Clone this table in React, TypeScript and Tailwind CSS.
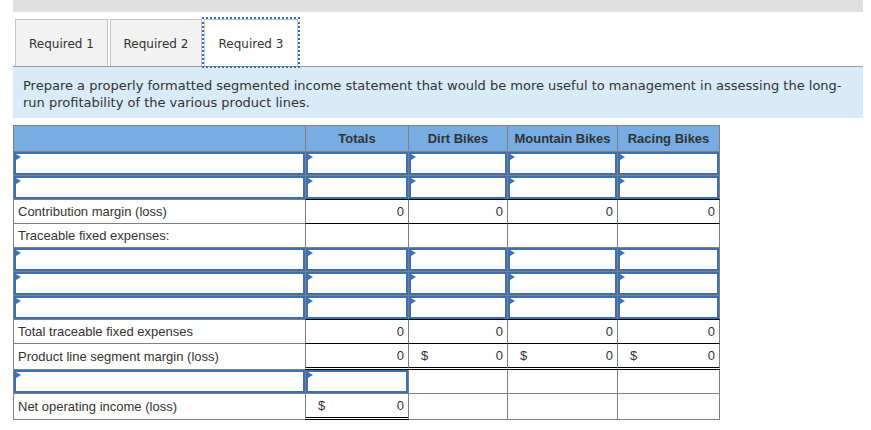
import React from "react"

type Kind = "header" | "label" | "input" | "calc" | "empty"

type TCell = {
  kind: Kind
  text?: string
  value?: string
  dollar?: boolean
  topBlack?: boolean
  bottomDouble?: boolean
}

const colWidths = ["w-[293px]", "w-[104px]", "w-[100px]", "w-[111px]", "w-[103px]"]

const Triangle = () => (
  <span className="absolute left-0 top-0 h-0 w-0 border-y-[3px] border-l-[5px] border-y-transparent border-l-[#3d72b8]" />
)

const Cell = (props: { cell: TCell; col: number; h: string }) => {
  const { cell, col, h } = props
  const base = `${colWidths[col]} ${h} ${col > 0 ? "-ml-px" : ""} shrink-0 border border-[#808080] box-border`

  if (cell.kind === "header") {
    return (
      <div className={`${base} flex items-center justify-center bg-[#78ade3] text-[13px] font-bold text-[#333]`}>
        {cell.text}
      </div>
    )
  }

  if (cell.kind === "input") {
    return (
      <div className={`${base} bg-white`}>
        <div className="relative h-full w-full border-2 border-[#3d70b3]">
          <Triangle />
        </div>
      </div>
    )
  }

  if (cell.kind === "label") {
    return (
      <div className={`${base} flex items-center bg-white pl-[4px] text-[13px] text-[#333]`}>{cell.text}</div>
    )
  }

  if (cell.kind === "calc") {
    return (
      <div
        className={`${base} relative z-10 flex items-center justify-between bg-white pl-[12px] pr-[4px] text-[13px] text-[#333] ${
          cell.topBlack ? "border-t-black" : ""
        } ${cell.bottomDouble ? "border-b-[3px] border-double border-b-black" : "border-b-black"}`}
      >
        <span>{cell.dollar ? "$" : ""}</span>
        <span>{cell.value}</span>
      </div>
    )
  }

  return <div className={`${base} bg-white`} />
}

const inputRow: TCell[] = [
  { kind: "input" },
  { kind: "input" },
  { kind: "input" },
  { kind: "input" },
  { kind: "input" },
]

const calcRow = (label: string, dollars: boolean[], double?: boolean): TCell[] => [
  { kind: "label", text: label },
  ...dollars.map((d) => ({ kind: "calc" as Kind, value: "0", dollar: d, topBlack: true, bottomDouble: double })),
]

const rows: { h: string; cells: TCell[] }[] = [
  {
    h: "h-[27px]",
    cells: [
      { kind: "header", text: "" },
      { kind: "header", text: "Totals" },
      { kind: "header", text: "Dirt Bikes" },
      { kind: "header", text: "Mountain Bikes" },
      { kind: "header", text: "Racing Bikes" },
    ],
  },
  { h: "h-[25px]", cells: inputRow },
  { h: "h-[25px]", cells: inputRow },
  { h: "h-[25px]", cells: calcRow("Contribution margin (loss)", [false, false, false, false]) },
  {
    h: "h-[25px]",
    cells: [
      { kind: "label", text: "Traceable fixed expenses:" },
      { kind: "empty" },
      { kind: "empty" },
      { kind: "empty" },
      { kind: "empty" },
    ],
  },
  { h: "h-[25px]", cells: inputRow },
  { h: "h-[25px]", cells: inputRow },
  { h: "h-[25px]", cells: inputRow },
  { h: "h-[25px]", cells: calcRow("Total traceable fixed expenses", [false, false, false, false]) },
  { h: "h-[27px]", cells: calcRow("Product line segment margin (loss)", [false, true, true, true], true) },
  {
    h: "h-[25px]",
    cells: [{ kind: "input" }, { kind: "input" }, { kind: "empty" }, { kind: "empty" }, { kind: "empty" }],
  },
  {
    h: "h-[27px]",
    cells: [
      { kind: "label", text: "Net operating income (loss)" },
      { kind: "calc", value: "0", dollar: true, bottomDouble: true },
      { kind: "empty" },
      { kind: "empty" },
      { kind: "empty" },
    ],
  },
]

const tabs = ["Required 1", "Required 2", "Required 3"]

export default function App() {
  return (
    <div className="min-h-[430px] w-[871px] bg-white px-[13px]">
      <div className="h-[12px] w-[850px] bg-[#e0e0e0]" />

      {/* Tabs */}
      <div className="ml-[2px] mt-[7px] flex gap-[2px] font-['DejaVu_Sans',Verdana,sans-serif] text-[12px] text-[#333]">
        {tabs.map((t, i) => (
          <div
            key={t}
            className={`flex h-[47px] items-center justify-center border border-b-0 border-[#c6c6c6] pt-px ${
              i === 2
                ? "w-[94px] bg-white outline-2 outline-offset-0 outline-dotted outline-[#2f6fc4]"
                : i === 0
                  ? "w-[93px] bg-[#f2f2f2]"
                  : "w-[92px] bg-[#f2f2f2]"
            }`}
          >
            {t}
          </div>
        ))}
      </div>

      {/* Instructions */}
      <div className="w-[850px] border-t border-[#9a9a9a] bg-[#d9eaf8] pb-[7px] pl-[10px] pr-[14px] pt-[10px] font-['DejaVu_Sans',Verdana,sans-serif] text-[13px] leading-[17px] text-[#333]">
        Prepare a properly formatted segmented income statement that would be more useful to management in assessing
        the long-run profitability of the various product lines.
      </div>

      {/* Statement table */}
      <div className="mt-[7px] font-['Liberation_Sans',Arial,sans-serif]">
        {rows.map((r, ri) => (
          <div key={ri} className={`flex ${ri > 0 ? "-mt-px" : ""}`}>
            {r.cells.map((c, ci) => (
              <Cell key={ci} cell={c} col={ci} h={r.h} />
            ))}
          </div>
        ))}
      </div>
    </div>
  )
}
